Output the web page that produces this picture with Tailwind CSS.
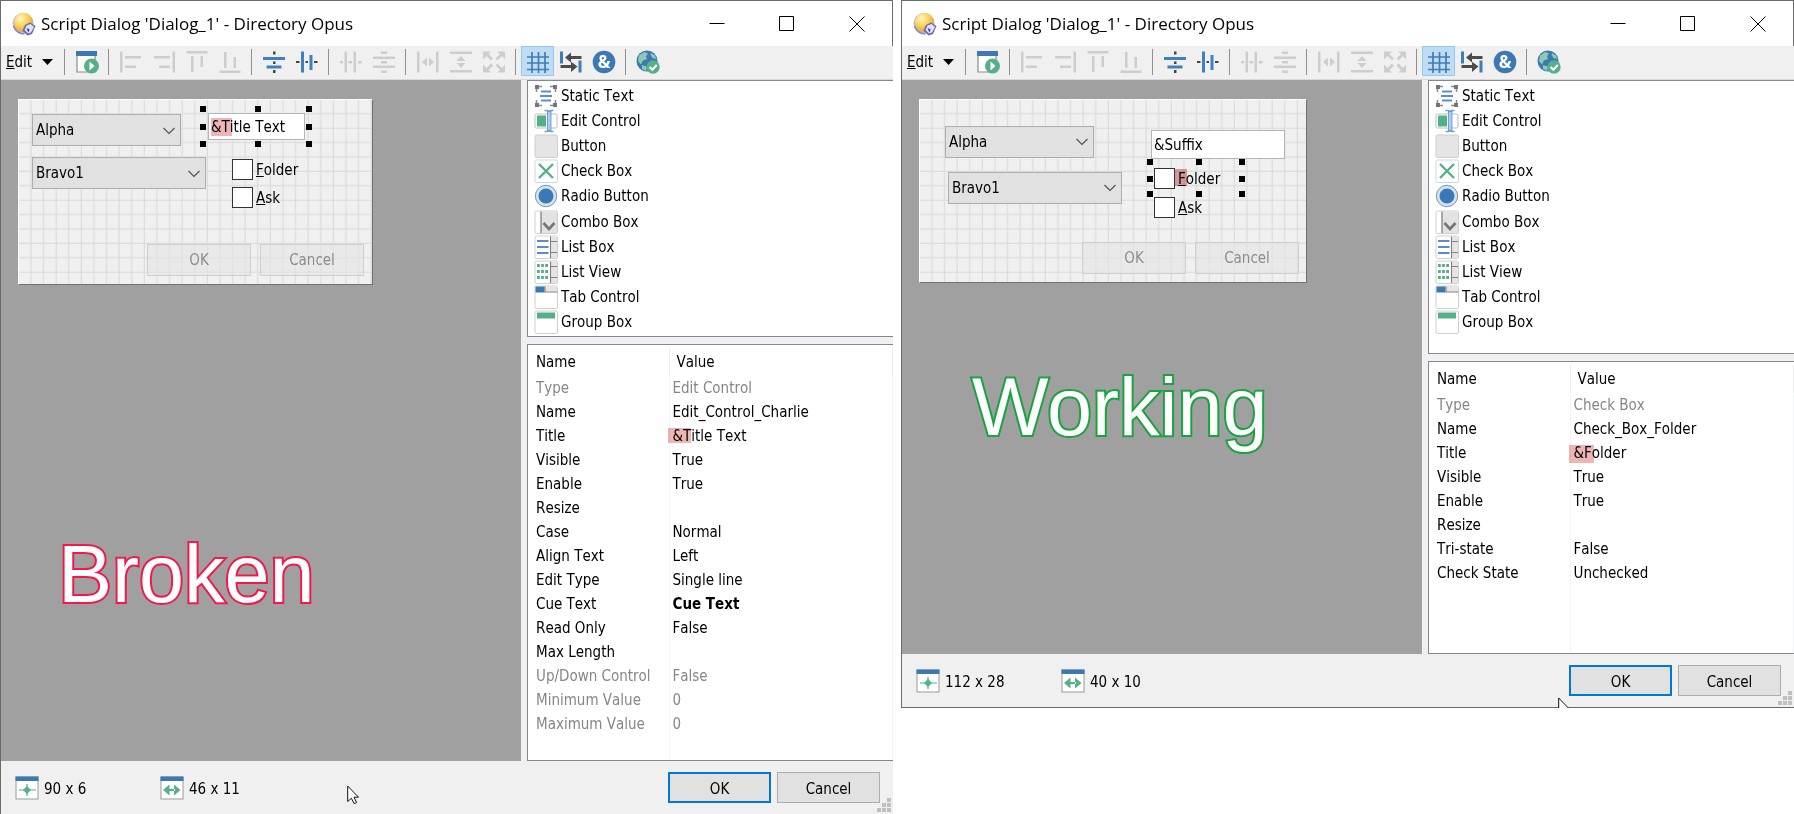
<!DOCTYPE html>
<html lang="en">
<head>
    <meta charset="UTF-8">
    <meta name="viewport" content="width=device-width, initial-scale=1.0">
    <title>Script Dialog</title>
    <script src="https://cdn.jsdelivr.net/npm/@tailwindcss/browser@4"></script>
</head>
<body class="bg-white text-black text-[15px] leading-5 font-['DejaVu_Sans_Condensed','Noto_Sans',sans-serif] [font-kerning:none]">

    <!-- Icons -->
    <svg class="absolute size-0" aria-hidden="true">
        <defs>
            <radialGradient id="ball" cx="0.35" cy="0.3" r="0.8">
                <stop offset="0" stop-color="#fff6c8"/>
                <stop offset="0.45" stop-color="#fbd35e"/>
                <stop offset="1" stop-color="#e0982a"/>
            </radialGradient>
            <pattern id="grid" width="12.6" height="14.4" patternUnits="userSpaceOnUse">
                <path d="M12 0V14.4M0 13.8H12.6" stroke="#dcdcdc" stroke-width="1.3" fill="none"/>
            </pattern>
        </defs>

        <symbol id="i-app" viewBox="0 0 24 24">
            <circle cx="11" cy="11.500" r="10.500" fill="#b9b6dc"/>
            <circle cx="11.500" cy="10.500" r="9.700" fill="url(#ball)"/>
            <path d="M1.500 14c2 5 6 8 11 8" stroke="#8a86c0" stroke-width="1.500" fill="none"/>
            <path d="M13 13l5-2.500 5.500 3.500-3.500 8-4.500 1.500-5-5z" fill="#6a69a8"/>
            <path d="M14.500 13.500l4-1.500 3.500 3-3 5.500-3 1-3.500-3.500z" fill="#dfe3fa"/>
            <path d="M14.500 16l3 1.500-1 3z" fill="#2a2ad0"/>
        </symbol>
        <symbol id="i-run" viewBox="0 0 24 24">
            <path d="M2 5V22H20V5" fill="#fff" stroke="#8c8c8c" stroke-width="1.200"/>
            <rect x="1" y="1" width="21" height="5" fill="#3c78b4"/>
            <circle cx="16.500" cy="16" r="7.500" fill="#55b08a"/>
            <path d="M14.500 11.500v9l5-4.500z" fill="#fff"/>
        </symbol>
        <symbol id="i-left" viewBox="0 0 24 24"><path d="M1 1.500h2.500v21H1zM6 6h16v2.500H6zM6 15.500h11V18H6z" fill="#cdcdcd"/></symbol>
        <symbol id="i-right" viewBox="0 0 24 24"><path d="M20.500 1.500H23v21h-2.500zM2 6h16v2.500H2zM7 15.500h11V18H7z" fill="#cdcdcd"/></symbol>
        <symbol id="i-top" viewBox="0 0 24 24"><path d="M1.500 1h21v2.500h-21zM6 6h2.500v16H6zM15.500 6H18v11h-2.500z" fill="#cdcdcd"/></symbol>
        <symbol id="i-bottom" viewBox="0 0 24 24"><path d="M1.500 20.500h21V23h-21zM6 2h2.500v16H6zM15.500 7H18v11h-2.500z" fill="#cdcdcd"/></symbol>
        <symbol id="i-midv" viewBox="0 0 24 24">
            <path d="M1 7h22v3H1zM4.500 15.500h15v3h-15z" fill="#3f80bf"/>
            <path d="M11 1.500h2.500v3H11zM11 11.500h2.500v2.500H11zM11 20h2.500v3H11z" fill="#444"/>
        </symbol>
        <symbol id="i-midh" viewBox="0 0 24 24">
            <path d="M6 1.500h3v21H6zM14.500 5h3v15h-3z" fill="#3f80bf"/>
            <path d="M1 11h3.500v2H1zM10.500 11h2.500v2h-2.500zM19 11h3.500v2H19z" fill="#444"/>
        </symbol>
        <symbol id="i-spreadh" viewBox="0 0 24 24"><path d="M5.500 1.500H8v21H5.500zM14.500 1.500H17v21h-2.500zM1 11h3v2.500H1zM9.500 11h3.500v2.500H9.500zM19 11h3.500v2.500H19z" fill="#cdcdcd"/></symbol>
        <symbol id="i-spreadv" viewBox="0 0 24 24"><path d="M1 6.500h22V9H1zM1 15.500h22V18H1zM9 1.500h6V4H9zM9 11h6v2.500H9zM9 20.500h6V23H9z" fill="#cdcdcd"/></symbol>
        <symbol id="i-samew" viewBox="0 0 24 24"><path d="M1 1.500h2.500v21H1zM20 1.500h2.500v21H20zM11 7.500v9L6 12zM13 7.500v9l5-4.500z" fill="#cdcdcd"/></symbol>
        <symbol id="i-sameh" viewBox="0 0 24 24"><path d="M1 1.500h22V4H1zM1 20h22v2.500H1zM7.500 11h9L12 6zM7.500 13h9L12 18z" fill="#cdcdcd"/></symbol>
        <symbol id="i-expand" viewBox="0 0 24 24">
            <path d="M1 1.500h8L6.500 4l4.500 4.500-2 2L4.500 6 1 9.500zM23 1.500v8L20 6l-4.500 4.500-2-2L18 4l-3-2.500zM1 22.500v-8L4.500 18 9 13.500l2 2L6.500 20 9 22.500zM23 22.500h-8L18 20l-4.500-4.500 2-2L20 18l3-3.500z" fill="#cdcdcd"/>
        </symbol>
        <symbol id="i-grid" viewBox="0 0 24 24"><path d="M6 2v21M12.500 2v21M19 2v21M1 7h22M1 13h22M1 19.500h22" stroke="#3f7db8" stroke-width="1.700" fill="none"/></symbol>
        <symbol id="i-tab" viewBox="0 0 24 24">
            <path d="M1 1.500h3v12H1zM19.500 10.500h3v12h-3z" fill="#3f7db8"/>
            <path d="M6 7.500L12 2.500V6h10.500v3H12v3.500zM18.500 16.500L12 11.800V15H1.500v3H12v4z" fill="#4c4c4c"/>
        </symbol>
        <symbol id="i-amp" viewBox="0 0 24 24">
            <circle cx="12" cy="12" r="11.300" fill="#3c78b4"/>
            <text x="12" y="18" text-anchor="middle" font-family="Noto Sans" font-weight="700" font-size="17" fill="#fff">&amp;</text>
        </symbol>
        <symbol id="i-globe" viewBox="0 0 24 24">
            <circle cx="11" cy="11" r="10.500" fill="#3c78b4"/>
            <path d="M3 5.500l5-3.500 4 1.500-2 3 1 2.500-4 1.500-2 4-3-3.500zM15 3l4 2.500 1.500 3.500-4-1-2-3zM6 15l5 1.500-1 4.500-4-2z" fill="#8ccab2"/>
            <circle cx="17" cy="17" r="6.700" fill="#55b08a"/>
            <path d="M13.500 17l2.800 2.800 4.500-4.800" stroke="#fff" stroke-width="2" fill="none"/>
        </symbol>

        <symbol id="c-static" viewBox="0 0 24 24">
            <path d="M4 2.500h4M16 2.500h4M4 21.500h4M16 21.500h4M2.500 4v4M2.500 16v4M21.500 4v4M21.500 16v4" stroke="#8a8a8a" stroke-width="1.500"/>
            <path d="M1 1h4v4H1zM19 1h4v4h-4zM1 19h4v4H1zM19 19h4v4h-4z" fill="#757575"/>
            <path d="M7 7.500h10M6 12h12M7 16.500h10" stroke="#5a8ec8" stroke-width="1.900"/>
        </symbol>
        <symbol id="c-edit" viewBox="0 0 24 24">
            <rect x="1" y="5" width="22" height="14" rx="1.500" fill="#fff" stroke="#bdbdbd"/>
            <path d="M3 6.500h9v11H3z" fill="#55b08a"/>
            <path d="M10.500 1.500h3l1.500 1 1.500-1h3M10.500 22.500h3l1.500-1 1.500 1h3" stroke="#6ea3d8" stroke-width="1.700" fill="none"/>
            <rect x="13.500" y="2.500" width="3.500" height="19" fill="#a9cdee" stroke="#5b94cf" stroke-width="0.800"/>
        </symbol>
        <symbol id="c-button" viewBox="0 0 24 24"><rect x="1" y="1" width="22.500" height="22.500" rx="1.500" fill="#e5e5e5" stroke="#cfcfcf"/></symbol>
        <symbol id="c-check" viewBox="0 0 24 24">
            <rect x="1" y="1" width="22.500" height="22.500" rx="1.500" fill="#fff" stroke="#c6d8ea"/>
            <path d="M5 5l14 14M19 5L5 19" stroke="#55b08a" stroke-width="2.400"/>
        </symbol>
        <symbol id="c-radio" viewBox="0 0 24 24">
            <circle cx="12" cy="12" r="10.700" fill="#cbe5fa" stroke="#909090"/>
            <circle cx="12" cy="12" r="7.500" fill="#3c78b4"/>
        </symbol>
        <symbol id="c-combo" viewBox="0 0 24 24">
            <rect x="1" y="1" width="22.500" height="22.500" rx="1.500" fill="#fff" stroke="#cfcfcf"/>
            <path d="M7 1.500h16v21.500H7z" fill="#e2e2e2"/>
            <path d="M7 1.500V23" stroke="#777" stroke-width="1.200"/>
            <path d="M9.500 13l5.500 6 5.500-6" stroke="#757575" stroke-width="2.600" fill="none"/>
        </symbol>
        <symbol id="c-list" viewBox="0 0 24 24">
            <rect x="1" y="1" width="22.500" height="22.500" rx="1.500" fill="#fff" stroke="#cfcfcf"/>
            <path d="M16.500 1.500h6.500v21.500h-6.500z" fill="#e5e5e5"/>
            <path d="M16.500 1.500V23M16.500 6.500H23M16.500 17.500H23" stroke="#808080" stroke-width="1.100"/>
            <path d="M3 6h11.500M3 12h11.500M3 18h11.500" stroke="#5a8ec8" stroke-width="1.800"/>
        </symbol>
        <symbol id="c-view" viewBox="0 0 24 24">
            <rect x="1" y="1" width="22.500" height="22.500" rx="1.500" fill="#fff" stroke="#cfcfcf"/>
            <path d="M16.500 1.500h6.500v21.500h-6.500z" fill="#e5e5e5"/>
            <path d="M16.500 1.500V23M16.500 6.500H23M16.500 17.500H23" stroke="#808080" stroke-width="1.100"/>
            <path d="M3 5.500h11M3 11.500h11M3 17.500h11" stroke="#55b08a" stroke-width="3" stroke-dasharray="2.800 1.300"/>
        </symbol>
        <symbol id="c-tab" viewBox="0 0 24 24">
            <rect x="1" y="1" width="22.500" height="22.500" rx="1.500" fill="#fff" stroke="#cfcfcf"/>
            <path d="M11 1.500h12v5H11z" fill="#e5e5e5"/>
            <path d="M1.500 1.500h9v6h-9z" fill="#3c78b4"/>
            <path d="M11 1.500V7H23.500" stroke="#808080" stroke-width="1.100" fill="none"/>
        </symbol>
        <symbol id="c-group" viewBox="0 0 24 24">
            <rect x="1" y="1" width="22.500" height="22.500" rx="1.500" fill="#fff" stroke="#cfcfcf"/>
            <path d="M3 2.500h18v6H3z" fill="#55b08a"/>
        </symbol>

        <symbol id="i-pos" viewBox="0 0 24 24">
            <rect x="1" y="1" width="22" height="22" fill="#fff" stroke="#9a9a9a"/>
            <path d="M0.500 0.500h23v4.500h-23z" fill="#3c78b4"/>
            <path d="M4 14h17M12 8v12" stroke="#55b08a" stroke-width="1.200"/>
            <path d="M12 10.500l3.500 3.500-3.500 3.500L8.500 14z" fill="#55b08a" stroke="#55b08a"/>
        </symbol>
        <symbol id="i-size" viewBox="0 0 24 24">
            <rect x="1" y="1" width="22" height="22" fill="#fff" stroke="#9a9a9a"/>
            <path d="M0.500 0.500h23v4.500h-23z" fill="#3c78b4"/>
            <path d="M3 14l6.500-5.500v11zM20.500 14L14 8.500v11zM9 13h6v2H9z" fill="#55b08a"/>
        </symbol>
        <symbol id="i-chevron" viewBox="0 0 12 8"><path d="M0.500 1l5.500 5.500L11.500 1" stroke="#555" stroke-width="1.200" fill="none"/></symbol>
        <symbol id="i-cursor" viewBox="0 0 12 20"><path d="M0.700 1v15.500l3.700-3.300 2.800 5.500 2.400-1.200-2.600-5.300h4.500z" fill="#fff" stroke="#111"/></symbol>
        <symbol id="i-grip" viewBox="0 0 14 14"><path d="M10 0h4v4h-4zM5 5h4v4H5zM10 5h4v4h-4zM0 10h4v4H0zM5 10h4v4H5zM10 10h4v4h-4z" fill="#bfbfbf"/></symbol>
    </svg>

    <div class="flex items-start gap-2 min-h-screen">

        <!-- Edit control window -->
        <section class="flex-1 min-w-0 min-h-screen flex flex-col border-l border-t border-[#6b6b6b] bg-[#f0f0f0]">
            <header data-part="titlebar"></header>
            <div data-part="toolbar"></div>
            <main class="flex-1 flex gap-1.5">
                <div class="relative flex-1 min-w-0 bg-[#a0a0a0]">
                    <div class="absolute left-[17px] top-[19px] w-[355px] h-[186px] border border-t-white border-l-white border-r-[#707070] border-b-[#707070] bg-[#f0f0f0]">
                        <svg class="absolute inset-0 w-full h-full"><rect width="100%" height="100%" fill="url(#grid)"/></svg>
                        <select aria-label="Alpha" class="absolute left-[13px] top-[14px] w-[149px] h-8 appearance-none border border-[#adadad] bg-[#e1e1e1] pl-[3px]"><option>Alpha</option></select>
                        <svg class="absolute left-36 top-[27px] w-3 h-2 pointer-events-none"><use href="#i-chevron"/></svg>
                        <select aria-label="Bravo" class="absolute left-[13px] top-[57px] w-[174px] h-8 appearance-none border border-[#adadad] bg-[#e1e1e1] pl-[3px]"><option>Bravo1</option></select>
                        <svg class="absolute left-[169px] top-[70px] w-3 h-2 pointer-events-none"><use href="#i-chevron"/></svg>
                        <input type="text" aria-label="Title text" value="&amp;Title Text" class="absolute left-[189px] top-[13px] w-[97px] h-[27px] border border-[#b4b4be] bg-white pl-[2px]">
                        <span class="absolute left-48 top-[18px] w-[21px] h-[18px] bg-[#efb4b4] mix-blend-multiply pointer-events-none"></span>
                        <i class="absolute left-[181px] top-[6px] size-1.5 bg-black"></i>
                        <i class="absolute left-[236px] top-[6px] size-1.5 bg-black"></i>
                        <i class="absolute left-[287px] top-[6px] size-1.5 bg-black"></i>
                        <i class="absolute left-[181px] top-6 size-1.5 bg-black"></i>
                        <i class="absolute left-[287px] top-6 size-1.5 bg-black"></i>
                        <i class="absolute left-[181px] top-[41px] size-1.5 bg-black"></i>
                        <i class="absolute left-[236px] top-[41px] size-1.5 bg-black"></i>
                        <i class="absolute left-[287px] top-[41px] size-1.5 bg-black"></i>
                        <label class="absolute left-[213px] top-[59px] flex items-center gap-[3px]"><input type="checkbox" class="appearance-none size-[21px] border border-[#333] bg-white"><span><u>F</u>older</span></label>
                        <label class="absolute left-[213px] top-[87px] flex items-center gap-[3px]"><input type="checkbox" class="appearance-none size-[21px] border border-[#333] bg-white"><span><u>A</u>sk</span></label>
                        <button disabled class="absolute left-[128px] top-36 w-[104px] h-8 border border-[#cfcfcf] bg-[#e4e4e4]/60 text-[#8c8c8c]">OK</button>
                        <button disabled class="absolute left-[241px] top-36 w-[104px] h-8 border border-[#cfcfcf] bg-[#e4e4e4]/60 text-[#8c8c8c]">Cancel</button>
                    </div>
                    <p class="absolute left-[57px] top-[454px] text-[81px] leading-[81px] text-white font-['Liberation_Sans',sans-serif] [-webkit-text-stroke:4px_#f5174a] [paint-order:stroke_fill] [stroke-linejoin:round]">Broken</p>
                </div>
                <aside class="w-[366px] flex flex-col gap-[7px]">
                    <div class="h-[257px] border border-r-0 border-[#828790] bg-white pt-0.5" data-part="controls"></div>
                    <div class="flex-1 border border-r-0 border-[#828790] bg-white pt-[3px]" data-part="props" data-set="edit"></div>
                </aside>
            </main>
            <footer class="relative h-[53px] flex items-center pl-[14px] pr-[13px]">
                <div class="w-[145px] flex items-center gap-[5px]"><svg class="size-6"><use href="#i-pos"/></svg><span class="pt-0.5">90 x 6</span></div>
                <div class="flex-1 flex items-center gap-[5px]"><svg class="size-6"><use href="#i-size"/></svg><span class="pt-0.5">46 x 11</span></div>
                <div class="flex gap-1.5">
                    <button class="w-[103px] h-[31px] border-2 border-[#0078d7] bg-[#e1e1e1] pt-0.5">OK</button>
                    <button class="w-[103px] h-[31px] border border-[#adadad] bg-[#e1e1e1] pt-0.5">Cancel</button>
                </div>
                <svg class="absolute right-0.5 bottom-0.5 size-[14px]"><use href="#i-grip"/></svg>
                <svg class="absolute left-[346px] top-6 w-3 h-5"><use href="#i-cursor"/></svg>
            </footer>
        </section>

        <!-- Check box window -->
        <section class="flex-1 min-w-0 flex flex-col border-l border-t border-b border-[#6b6b6b] bg-[#f0f0f0]">
            <header data-part="titlebar"></header>
            <div data-part="toolbar"></div>
            <main class="flex gap-1.5">
                <div class="relative flex-1 min-w-0 bg-[#a0a0a0]">
                    <div class="absolute left-[17px] top-[19px] w-[388px] h-[184px] border border-t-white border-l-white border-r-[#707070] border-b-[#707070] bg-[#f0f0f0]">
                        <svg class="absolute inset-0 w-full h-full"><rect width="100%" height="100%" fill="url(#grid)"/></svg>
                        <select aria-label="Alpha" class="absolute left-[25px] top-[26px] w-[149px] h-8 appearance-none border border-[#adadad] bg-[#e1e1e1] pl-[3px]"><option>Alpha</option></select>
                        <svg class="absolute left-[156px] top-[38px] w-3 h-2 pointer-events-none"><use href="#i-chevron"/></svg>
                        <select aria-label="Bravo" class="absolute left-7 top-[72px] w-[174px] h-8 appearance-none border border-[#adadad] bg-[#e1e1e1] pl-[3px]"><option>Bravo1</option></select>
                        <svg class="absolute left-[184px] top-[84px] w-3 h-2 pointer-events-none"><use href="#i-chevron"/></svg>
                        <input type="text" aria-label="Suffix" value="&amp;Suffix" class="absolute left-[231px] top-[30px] w-[134px] h-[29px] border border-[#b4b4be] bg-white pl-[2px]">
                        <i class="absolute left-[227px] top-[59px] size-1.5 bg-black"></i>
                        <i class="absolute left-[276px] top-[59px] size-1.5 bg-black"></i>
                        <i class="absolute left-[319px] top-[59px] size-1.5 bg-black"></i>
                        <i class="absolute left-[227px] top-[76px] size-1.5 bg-black"></i>
                        <i class="absolute left-[319px] top-[76px] size-1.5 bg-black"></i>
                        <i class="absolute left-[227px] top-[91px] size-1.5 bg-black"></i>
                        <i class="absolute left-[276px] top-[91px] size-1.5 bg-black"></i>
                        <i class="absolute left-[319px] top-[91px] size-1.5 bg-black"></i>
                        <label class="absolute left-[234px] top-[68px] flex items-center gap-[3px]"><input type="checkbox" class="appearance-none size-[21px] border border-[#333] bg-white"><span><u>F</u>older</span></label>
                        <span class="absolute left-[255px] top-[69px] w-3 h-[17px] bg-[#e3a3a3] mix-blend-multiply pointer-events-none"></span>
                        <label class="absolute left-[234px] top-[97px] flex items-center gap-[3px]"><input type="checkbox" class="appearance-none size-[21px] border border-[#333] bg-white"><span><u>A</u>sk</span></label>
                        <button disabled class="absolute left-[162px] top-[142px] w-[104px] h-8 border border-[#cfcfcf] bg-[#e4e4e4]/60 text-[#8c8c8c]">OK</button>
                        <button disabled class="absolute left-[275px] top-[142px] w-[104px] h-8 border border-[#cfcfcf] bg-[#e4e4e4]/60 text-[#8c8c8c]">Cancel</button>
                    </div>
                    <p class="absolute left-[70px] top-[287px] text-[81px] leading-[81px] text-white font-['Liberation_Sans',sans-serif] [-webkit-text-stroke:4px_#16a53c] [paint-order:stroke_fill] [stroke-linejoin:round] [font-kerning:normal]">Working</p>
                </div>
                <aside class="w-[366px] flex flex-col gap-[7px]">
                    <div class="h-[274px] border border-r-0 border-[#828790] bg-white pt-0.5" data-part="controls"></div>
                    <div class="h-[293px] border border-r-0 border-[#828790] bg-white pt-[3px]" data-part="props" data-set="check"></div>
                </aside>
            </main>
            <footer class="relative h-[53px] flex items-center pl-[14px] pr-[13px]">
                <div class="w-[145px] flex items-center gap-[5px]"><svg class="size-6"><use href="#i-pos"/></svg><span class="pt-0.5">112 x 28</span></div>
                <div class="flex-1 flex items-center gap-[5px]"><svg class="size-6"><use href="#i-size"/></svg><span class="pt-0.5">40 x 10</span></div>
                <div class="flex gap-1.5">
                    <button class="w-[103px] h-[31px] border-2 border-[#0078d7] bg-[#e1e1e1] pt-0.5">OK</button>
                    <button class="w-[103px] h-[31px] border border-[#adadad] bg-[#e1e1e1] pt-0.5">Cancel</button>
                </div>
                <svg class="absolute right-0.5 bottom-0.5 size-[14px]"><use href="#i-grip"/></svg>
                <div class="absolute right-[224px] -bottom-px w-3 h-[11px] overflow-hidden"><svg class="w-3 h-5"><use href="#i-cursor"/></svg></div>
            </footer>
        </section>
    </div>

    <script>
        // "|" is a separator, the third field marks the toggled button
        const tools = [
            "|", ["run", "Run dialog"], "|",
            ["left", "Align left"], ["right", "Align right"], ["top", "Align top"], ["bottom", "Align bottom"], "|",
            ["midv", "Center vertically"], ["midh", "Center horizontally"], "|",
            ["spreadh", "Space across"], ["spreadv", "Space down"], "|",
            ["samew", "Same width"], ["sameh", "Same height"], ["expand", "Same size"], "|",
            ["grid", "Grid", true], ["tab", "Tab order"], ["amp", "Accelerators"], "|",
            ["globe", "Language"]
        ];

        const controls = [
            ["static", "Static Text"], ["edit", "Edit Control"], ["button", "Button"], ["check", "Check Box"],
            ["radio", "Radio Button"], ["combo", "Combo Box"], ["list", "List Box"], ["view", "List View"],
            ["tab", "Tab Control"], ["group", "Group Box"]
        ];

        const props = {
            edit: [
                ["Type", "Edit Control", "text-[#868686]"],
                ["Name", "Edit_Control_Charlie"],
                ["Title", "&amp;Title Text", "", "w-[23px] h-[15px]"],
                ["Visible", "True"],
                ["Enable", "True"],
                ["Resize", ""],
                ["Case", "Normal"],
                ["Align Text", "Left"],
                ["Edit Type", "Single line"],
                ["Cue Text", "<b>Cue Text</b>"],
                ["Read Only", "False"],
                ["Max Length", ""],
                ["Up/Down Control", "False", "text-[#868686]"],
                ["Minimum Value", "0", "text-[#868686]"],
                ["Maximum Value", "0", "text-[#868686]"]
            ],
            check: [
                ["Type", "Check Box", "text-[#868686]"],
                ["Name", "Check_Box_Folder"],
                ["Title", "&amp;Folder", "", "w-[25px] h-[18px]"],
                ["Visible", "True"],
                ["Enable", "True"],
                ["Resize", ""],
                ["Tri-state", "False"],
                ["Check State", "Unchecked"]
            ]
        };

        const fill = (part, html) => document.querySelectorAll(`[data-part="${part}"]`).forEach(el => {
            el.innerHTML = typeof html === "function" ? html(el) : html;
        });

        fill("titlebar", `
            <div class="h-[45px] flex items-center bg-white border-r border-[#6b6b6b] pl-[11px]">
                <svg class="size-6"><use href="#i-app"/></svg>
                <h1 class="flex-1 pl-[5px] text-[17px] leading-6 whitespace-nowrap font-['Open_Sans','Noto_Sans',sans-serif]">Script Dialog 'Dialog_1' - Directory Opus</h1>
                <button aria-label="Minimize" class="w-[70px] h-full flex items-center justify-center"><svg class="size-4" viewBox="0 0 16 16"><path d="M0.500 7.500h15" stroke="#000"/></svg></button>
                <button aria-label="Maximize" class="w-[70px] h-full flex items-center justify-center"><svg class="size-4" viewBox="0 0 16 16"><path d="M0.500 0.500h14v14h-14z" stroke="#000" fill="none"/></svg></button>
                <button aria-label="Close" class="w-[70px] h-full flex items-center justify-center"><svg class="size-4" viewBox="0 0 16 16"><path d="M0.500 0.500l15 15M15.500 0.500l-15 15" stroke="#000"/></svg></button>
            </div>
        `);

        fill("toolbar", `
            <div class="h-[34px] flex items-start border-b border-[#d8d8d8]">
                <button class="w-[58px] h-[30px] flex items-center gap-[10px] pl-[5px] pt-0.5"><span><u>E</u>dit</span><svg class="w-[11px] h-1.5" viewBox="0 0 11 6"><path d="M0 0h11L5.500 6z"/></svg></button>
                ${tools.map(t => t === "|"
                    ? `<span class="w-[11px] h-[30px] pt-[3px] pb-px flex justify-center"><span class="w-px h-full bg-[#8f8f8f]"></span></span>`
                    : `<button aria-label="${t[1]}" class="w-[33px] h-[30px] pt-0.5 flex items-center justify-center ${t[2] ? "border border-[#90c8f6] bg-[#bfdcf3]" : ""}"><svg class="size-6 shrink-0"><use href="#i-${t[0]}"/></svg></button>`
                ).join("")}
            </div>
        `);

        fill("controls", `
            <ul class="h-[252px] grid grid-rows-10">
                ${controls.map(([icon, name]) => `
                    <li class="flex items-center gap-[3px] pl-1.5"><svg class="size-6"><use href="#c-${icon}"/></svg>${name}</li>
                `).join("")}
            </ul>
        `);

        fill("props", el => `
            <table class="w-full h-full table-fixed text-left">
                <thead>
                    <tr class="h-7"><th class="w-[141px] pl-2 font-normal">Name</th><th class="border-x border-[#ededed] pl-[7px] font-normal">Value</th></tr>
                </thead>
                <tbody>
                    ${props[el.dataset.set].map(([name, value, tone, mark]) => `
                        <tr class="h-6 ${tone || ""}">
                            <td class="pl-2">${name}</td>
                            <td class="relative border-x border-[#eef5fb] pl-[3px]">${value}${mark ? `<span class="absolute -left-0.5 top-1 ${mark} bg-[#efb4b4] mix-blend-multiply"></span>` : ""}</td>
                        </tr>
                    `).join("")}
                    <tr><td></td><td class="border-x border-[#eef5fb]"></td></tr>
                </tbody>
            </table>
        `);
    </script>

</body>
</html>
